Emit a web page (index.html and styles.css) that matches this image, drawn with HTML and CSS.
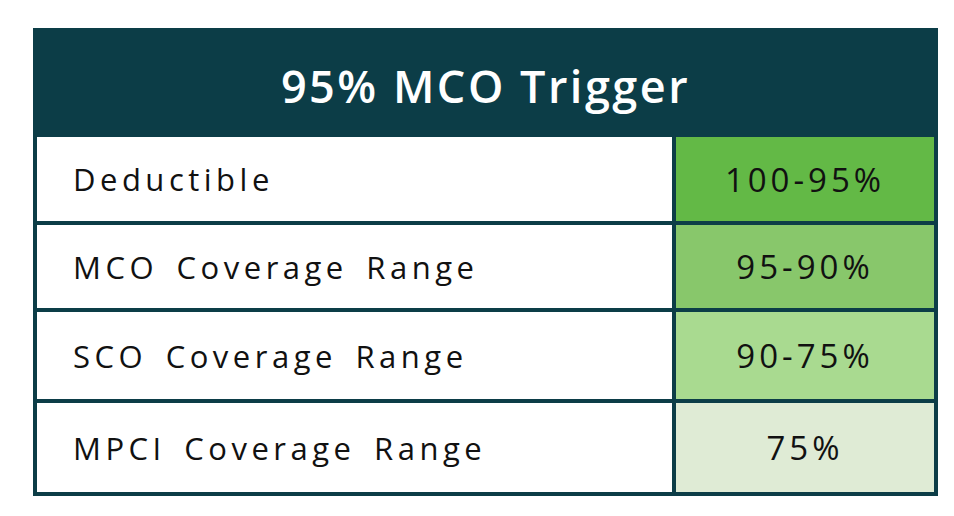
FILE: index.html
```html
<!DOCTYPE html>
<html lang="en">
<head>
<meta charset="utf-8">
<title>95% MCO Trigger</title>
<link rel="stylesheet" href="styles.css">
</head>
<body>
<div class="page">
  <div class="trigger-table">
    <div class="title">95% MCO Trigger</div>
    <div class="grid">
      <div class="label row-a">Deductible</div>
      <div class="value row-a shade-1">100-95%</div>
      <div class="label row-b">MCO Coverage Range</div>
      <div class="value row-b shade-2">95-90%</div>
      <div class="label row-c">SCO Coverage Range</div>
      <div class="value row-c shade-3">90-75%</div>
      <div class="label row-d">MPCI Coverage Range</div>
      <div class="value row-d shade-4">75%</div>
    </div>
  </div>
</div>
</body>
</html>
```
FILE: styles.css
```css
* { box-sizing: border-box; }
html, body { margin: 0; padding: 0; background: #ffffff; }
body { font-family: "Open Sans", "DejaVu Sans", sans-serif; }
.page { padding: 28px 0 0 33px; }
.trigger-table {
  width: 905px;
  background: #0c3d47;
}
.title {
  height: 109px;
  display: flex;
  align-items: center;
  justify-content: center;
  color: #ffffff;
  font-size: 45px;
  font-weight: 600;
  letter-spacing: 2.5px;
  padding-top: 6px;
}
.grid {
  display: grid;
  grid-template-columns: 635px 258px;
  grid-template-rows: 84px 83px 87px 89px;
  column-gap: 4px;
  row-gap: 4px;
  padding: 0 4px 4px 4px;
}
.label {
  background: #ffffff;
  display: flex;
  align-items: center;
  padding-left: 36px;
  font-size: 31px;
  letter-spacing: 4.5px;
  word-spacing: 6px;
  color: #111111;
}
.value {
  display: flex;
  align-items: center;
  justify-content: center;
  font-size: 33px;
  letter-spacing: 4px;
  color: #111111;
}
.shade-1 { background: #63b946; }
.shade-2 { background: #88c76b; }
.shade-3 { background: #a9da90; }
.shade-4 { background: #dfebd5; }
```
